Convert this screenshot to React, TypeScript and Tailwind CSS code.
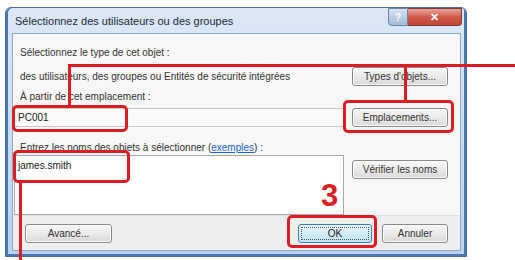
import React from 'react';

function WinButton({ label, className = '' }: { label: string; className?: string }) {
    return (
        <div
            className={`flex items-center justify-center h-[19px] rounded-[3px] border border-[#8a8a8a] bg-gradient-to-b from-[#f6f6f6] via-[#ebebeb] to-[#d8d8d8] text-[10px] text-[#333] shadow-[inset_0_0_0_1px_#fcfcfc] ${className}`}
        >
            {label}
        </div>
    );
}

export default function App() {
    return (
        <div className="relative w-[515px] h-[260px] bg-white overflow-hidden font-['Liberation_Sans',Arial,sans-serif]">
            {/* Dialog window */}
            <div className="ml-[5px] mt-[7px] w-[462px] h-[250px] flex flex-col rounded-t-[6px] border border-[#4a6d9a] bg-gradient-to-b from-[#dce8f6] to-[#bcd1eb] shadow-[inset_-2px_-2px_0_#4a78b8,inset_2px_0_0_#4a78b8]">
                {/* Title bar */}
                <div className="flex items-start h-[25px] pl-[9px]">
                    <span className="mt-[7px] text-[11px] leading-[13px] text-[#1e2a3a]">
                        Sélectionnez des utilisateurs ou des groupes
                    </span>
                    <div className="ml-auto mr-[4px] flex">
                        <div className="flex items-center justify-center w-[20px] h-[18px] rounded-bl-[4px] border border-[#6d84a3] bg-gradient-to-b from-[#d6e2f1] to-[#a6bcd8] text-[10px] font-bold text-white">
                            ?
                        </div>
                        <div className="flex items-center justify-center w-[54px] h-[18px] rounded-br-[4px] border border-l-0 border-[#7a3a3a] bg-gradient-to-b from-[#e8a39a] via-[#cf5a4c] to-[#c44434] text-[11px] font-bold text-white">
                            ✕
                        </div>
                    </div>
                </div>

                {/* Client area */}
                <div className="ml-[6px] mr-[5px] mb-[5px] flex-1 flex flex-col border border-[#8fa7c6] bg-[#f7f7f7]">
                    <div className="pl-[7px] mt-[13px] text-[10px] leading-[12px] text-[#333]">
                        Sélectionnez le type de cet objet :
                    </div>
                    <div className="mt-[7px] flex items-center h-[20px] pr-[12px]">
                        <span className="pl-[7px] text-[10px] text-[#333]">
                            des utilisateurs, des groupes ou Entités de sécurité intégrées
                        </span>
                        <WinButton label="Types d'objets..." className="ml-auto w-[96px]" />
                    </div>
                    <div className="pl-[7px] mt-[5px] text-[10px] leading-[12px] text-[#333]">
                        À partir de cet emplacement :
                    </div>
                    <div className="mt-[4px] flex items-center h-[20px] pr-[12px]">
                        <div className="ml-[1px] w-[330px] h-[19px] flex items-center pl-[3px] border border-[#c9c9c9] bg-[#fafafa] text-[10px] text-[#222]">
                            PC001
                        </div>
                        <WinButton label="Emplacements..." className="ml-auto w-[96px]" />
                    </div>
                    <div className="pl-[7px] mt-[15px] text-[10px] leading-[12px] text-[#333]">
                        Entrez les noms des objets à sélectionner (
                        <span className="text-[#1a66c7] underline">exemples</span>) :
                    </div>
                    <div className="mt-[1px] flex items-start pr-[12px]">
                        <div className="ml-[1px] w-[330px] h-[60px] pl-[3px] pt-[4px] border border-[#a8a8a8] bg-white text-[10px] leading-[12px] text-[#222]">
                            james.smith
                        </div>
                        <WinButton label="Vérifier les noms" className="ml-auto mt-[5px] w-[96px]" />
                    </div>
                    <div className="flex-1 flex items-center pr-[12px] pl-[12px] bg-[#eeeeee] border-t border-[#dfdfdf]">
                        <WinButton label="Avancé..." className="w-[87px]" />
                        <div className="ml-auto w-[74px] h-[19px] rounded-[3px] border border-[#3c7fb1] bg-gradient-to-b from-[#eaf6fd] to-[#bfe2f7] p-[2px]">
                            <div className="w-full h-full flex items-center justify-center border border-dotted border-[#555] text-[10px] text-[#222]">
                                OK
                            </div>
                        </div>
                        <WinButton label="Annuler" className="ml-[10px] w-[66px]" />
                    </div>
                </div>
            </div>

            {/* Red annotations drawn over the screenshot */}
            <div className="absolute left-[68px] top-[64px] w-[447px] h-[3px] bg-[#dc1e24]" />
            <div className="absolute left-[68px] top-[64px] w-[3px] h-[42px] bg-[#dc1e24]" />
            <div className="absolute left-[12px] top-[105px] w-[116px] h-[27px] rounded-[5px] border-[3px] border-[#dc1e24]" />
            <div className="absolute left-[404px] top-[64px] w-[3px] h-[37px] bg-[#dc1e24]" />
            <div className="absolute left-[343px] top-[100px] w-[111px] h-[33px] rounded-[5px] border-[3px] border-[#dc1e24]" />
            <div className="absolute left-[13px] top-[150px] w-[117px] h-[33px] rounded-[5px] border-[3px] border-[#dc1e24]" />
            <div className="absolute left-[19px] top-[182px] w-[3px] h-[78px] bg-[#dc1e24]" />
            <div className="absolute left-[287px] top-[215px] w-[90px] h-[33px] rounded-[5px] border-[3px] border-[#dc1e24]" />
            <div className="absolute left-[321px] top-[180px] text-[31px] leading-[32px] font-bold text-[#dc1e24]">
                3
            </div>
        </div>
    );
}
